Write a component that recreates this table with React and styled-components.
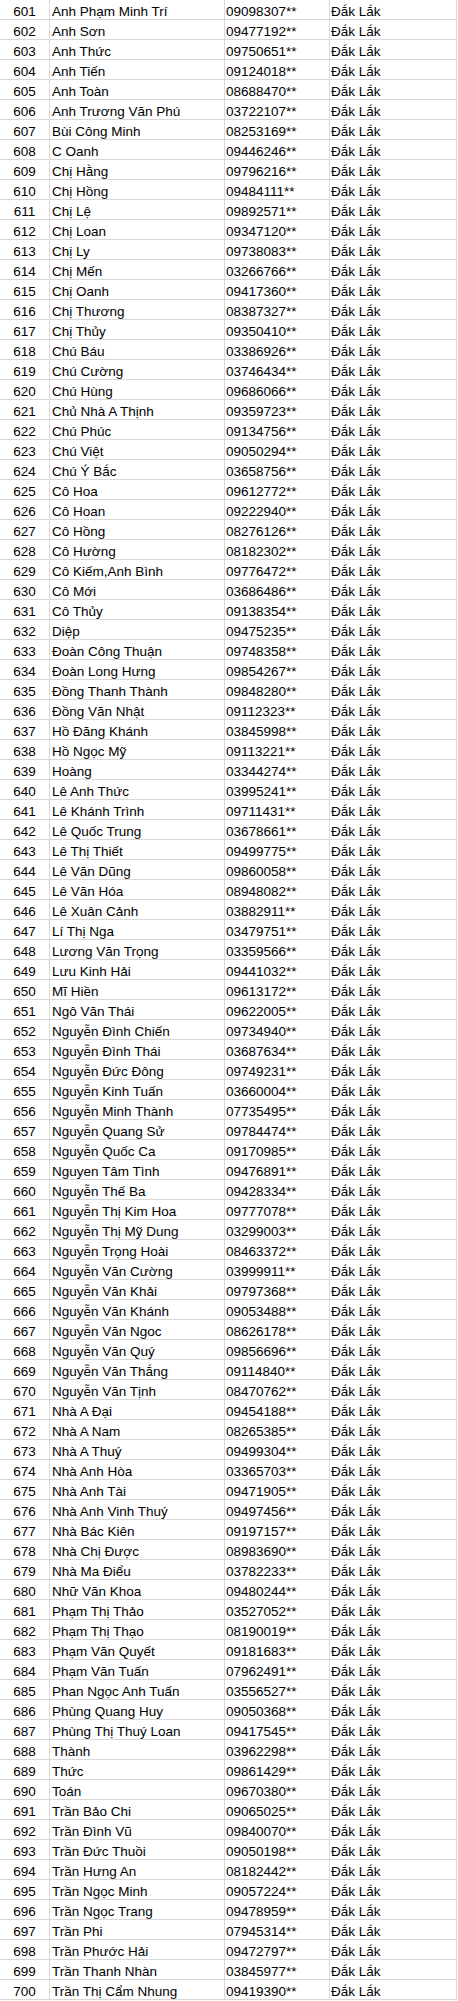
import styled, { createGlobalStyle } from "styled-components";

const GlobalStyle = createGlobalStyle`
    html, body {
        margin: 0;
        padding: 0;
        background: #ffffff;
    }
`;

const rows = [
    ["Anh Phạm Minh Trí", "09098307"],
    ["Anh Sơn", "09477192"],
    ["Anh Thức", "09750651"],
    ["Anh Tiến", "09124018"],
    ["Anh Toàn", "08688470"],
    ["Anh Trương Văn Phú", "03722107"],
    ["Bùi Công Minh", "08253169"],
    ["C Oanh", "09446246"],
    ["Chị Hằng", "09796216"],
    ["Chị Hồng", "09484111"],
    ["Chị Lệ", "09892571"],
    ["Chị Loan", "09347120"],
    ["Chị Ly", "09738083"],
    ["Chị Mến", "03266766"],
    ["Chị Oanh", "09417360"],
    ["Chị Thương", "08387327"],
    ["Chị Thủy", "09350410"],
    ["Chú Báu", "03386926"],
    ["Chú Cường", "03746434"],
    ["Chú Hùng", "09686066"],
    ["Chủ Nhà A Thịnh", "09359723"],
    ["Chú Phúc", "09134756"],
    ["Chú Việt", "09050294"],
    ["Chú Ý Bắc", "03658756"],
    ["Cô Hoa", "09612772"],
    ["Cô Hoan", "09222940"],
    ["Cô Hồng", "08276126"],
    ["Cô Hường", "08182302"],
    ["Cô Kiếm,Anh Bình", "09776472"],
    ["Cô Mới", "03686486"],
    ["Cô Thủy", "09138354"],
    ["Diệp", "09475235"],
    ["Đoàn Công Thuận", "09748358"],
    ["Đoàn Long Hưng", "09854267"],
    ["Đồng Thanh Thành", "09848280"],
    ["Đồng Văn Nhật", "09112323"],
    ["Hồ Đăng Khánh", "03845998"],
    ["Hồ Ngọc Mỹ", "09113221"],
    ["Hoàng", "03344274"],
    ["Lê Anh Thức", "03995241"],
    ["Lê Khánh Trình", "09711431"],
    ["Lê Quốc Trung", "03678661"],
    ["Lê Thị Thiết", "09499775"],
    ["Lê Văn Dũng", "09860058"],
    ["Lê Văn Hóa", "08948082"],
    ["Lê Xuân Cảnh", "03882911"],
    ["Lí Thị Nga", "03479751"],
    ["Lương Văn Trọng", "03359566"],
    ["Lưu Kinh Hải", "09441032"],
    ["Mĩ Hiền", "09613172"],
    ["Ngô Văn Thái", "09622005"],
    ["Nguyễn Đình Chiến", "09734940"],
    ["Nguyễn Đình Thái", "03687634"],
    ["Nguyễn Đức Đông", "09749231"],
    ["Nguyễn Kinh Tuấn", "03660004"],
    ["Nguyễn Minh Thành", "07735495"],
    ["Nguyễn Quang Sử", "09784474"],
    ["Nguyễn Quốc Ca", "09170985"],
    ["Nguyen Tâm Tình", "09476891"],
    ["Nguyễn Thế Ba", "09428334"],
    ["Nguyễn Thị Kim Hoa", "09777078"],
    ["Nguyễn Thị Mỹ Dung", "03299003"],
    ["Nguyễn Trọng Hoài", "08463372"],
    ["Nguyễn Văn Cường", "03999911"],
    ["Nguyễn Văn Khải", "09797368"],
    ["Nguyễn Văn Khánh", "09053488"],
    ["Nguyễn Văn Ngoc", "08626178"],
    ["Nguyễn Văn Quý", "09856696"],
    ["Nguyễn Văn Thắng", "09114840"],
    ["Nguyễn Văn Tịnh", "08470762"],
    ["Nhà A Đại", "09454188"],
    ["Nhà A Nam", "08265385"],
    ["Nhà A Thuý", "09499304"],
    ["Nhà Anh Hòa", "03365703"],
    ["Nhà Anh Tài", "09471905"],
    ["Nhà Anh Vinh Thuý", "09497456"],
    ["Nhà Bác Kiên", "09197157"],
    ["Nhà Chị Được", "08983690"],
    ["Nhà Ma Điểu", "03782233"],
    ["Nhữ Văn Khoa", "09480244"],
    ["Phạm Thị Thảo", "03527052"],
    ["Phạm Thị Thạo", "08190019"],
    ["Phạm Văn Quyết", "09181683"],
    ["Phạm Văn Tuấn", "07962491"],
    ["Phan Ngọc Anh Tuấn", "03556527"],
    ["Phùng Quang Huy", "09050368"],
    ["Phùng Thị Thuý Loan", "09417545"],
    ["Thành", "03962298"],
    ["Thức", "09861429"],
    ["Toán", "09670380"],
    ["Trần Bảo Chi", "09065025"],
    ["Trần Đình Vũ", "09840070"],
    ["Trần Đức Thuồi", "09050198"],
    ["Trần Hưng An", "08182442"],
    ["Trần Ngọc Minh", "09057224"],
    ["Trần Ngọc Trang", "09478959"],
    ["Trần Phi", "07945314"],
    ["Trần Phước Hải", "09472797"],
    ["Trần Thanh Nhàn", "03845977"],
    ["Trần Thị Cẩm Nhung", "09419390"],
];

const Sheet = styled.div`
    display: flex;
    flex-direction: column;
    width: 457px;
    font-family: "Liberation Sans", Arial, sans-serif;
    font-size: 13.5px;
    color: #000000;
`;

const Row = styled.div`
    display: grid;
    grid-template-columns: 50px 175px 105px 127px;
    height: 20px;
`;

const Cell = styled.div`
    box-sizing: border-box;
    height: 20px;
    padding: 4px ${({ $pad }) => $pad || 1}px 0;
    line-height: 16px;
    text-align: ${({ $align }) => $align || "left"};
    white-space: nowrap;
    overflow: hidden;
    border-right: 1px solid #d9d9d9;
    border-bottom: 1px solid #d9d9d9;
`;

const App = () => {
    return (
        <>
            <GlobalStyle />
            <Sheet>
                {rows.map(([name, phone], i) => (
                    <Row key={i}>
                        <Cell $align="center" $pad={0}>{601 + i}</Cell>
                        <Cell $pad={2}>{name}</Cell>
                        <Cell>{phone}**</Cell>
                        <Cell>Đắk Lắk</Cell>
                    </Row>
                ))}
            </Sheet>
        </>
    );
};

export default App;
